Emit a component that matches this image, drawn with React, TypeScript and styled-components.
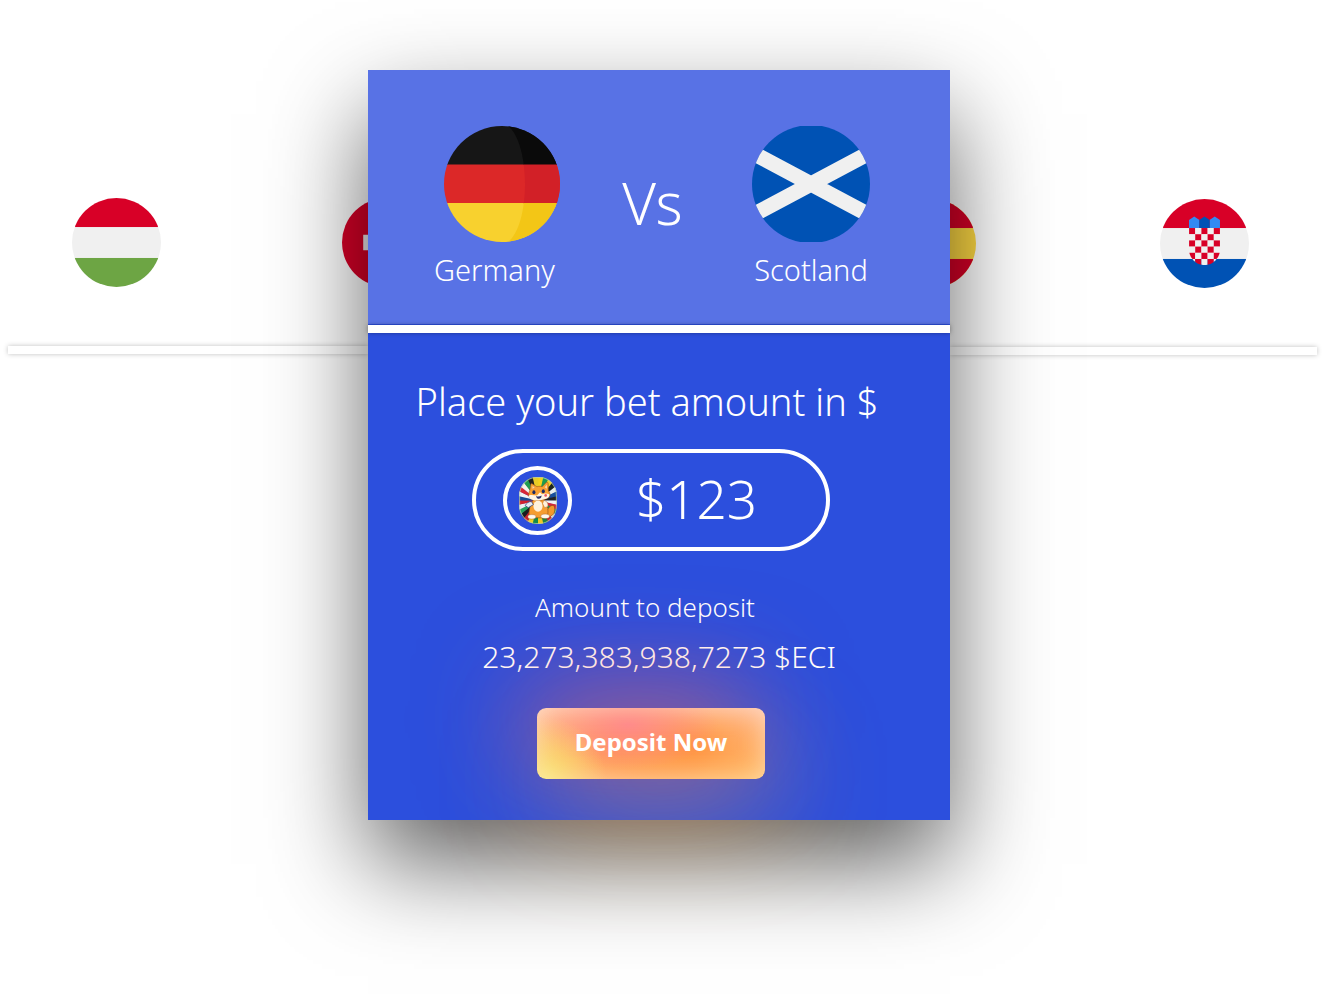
import React, { useState } from "react";
import styled, { createGlobalStyle } from "styled-components";

const GlobalStyle = createGlobalStyle`
  *, *::before, *::after { box-sizing: border-box; }
  body {
    margin: 0;
    background: #fff;
    color: #fff;
    font-family: "Noto Sans", "Open Sans", sans-serif;
    font-weight: 340;
  }
`;

const Stage = styled.main`
  display: grid;
  grid-template-columns: minmax(0, 360fr) 582px minmax(0, 367fr);
  align-items: start;
  min-height: 100vh;
  padding: 0 8px;
  overflow: hidden;
`;

const MatchStrip = styled.section<{ $side: "left" | "right" }>`
  padding-top: ${(p) => (p.$side === "left" ? 198 : 199)}px;
`;

const StripFlags = styled.div<{ $side: "left" | "right" }>`
  display: flex;
  justify-content: ${(p) => (p.$side === "left" ? "flex-start" : "flex-end")};
  gap: ${(p) => (p.$side === "left" ? 181 : 184)}px;
  padding: ${(p) => (p.$side === "left" ? "0 0 0 64px" : "0 68px 0 0")};
  margin-bottom: 59px;
  svg { display: block; flex: none; width: 89px; height: 89px; }
`;

const StripLine = styled.div`
  height: 8px;
  background: #fff;
  box-shadow: 0 0 5px rgba(0, 0, 0, 0.25);
`;

const Card = styled.form`
  position: relative;
  z-index: 1;
  margin: 70px 0 0;
  background: #2c4fdd;
  box-shadow: 0 44px 92px rgba(0, 0, 0, 0.61);
`;

const CardHeader = styled.header`
  display: grid;
  grid-template-columns: 136px 1fr 136px;
  align-items: start;
  min-height: 254px;
  padding: 56px 71px 32px 66px;
  background: #5872e5;
`;

const Team = styled.div`
  display: flex;
  flex-direction: column;
  align-items: center;
  gap: 10px;
  svg { display: block; }
`;

const TeamName = styled.span<{ $align?: "start" | "center" }>`
  align-self: ${(p) => p.$align ?? "center"};
  font-size: 29px;
  line-height: 36px;
`;

const Versus = styled.span`
  padding: 40px 8px 0 0;
  font-size: 58px;
  line-height: 74px;
  text-align: center;
`;

const Divider = styled.hr`
  position: relative;
  height: 8px;
  margin: 1px 0 0;
  border: 0;
  background: #fff;
  box-shadow: 0 0 4px rgba(0, 0, 0, 0.35);
`;

const CardBody = styled.div`
  display: flex;
  flex-direction: column;
  align-items: center;
  padding: 44px 16px 41px 0;
`;

const BetLabel = styled.label`
  padding-right: 8px;
  font-size: 38px;
  line-height: 48px;
  white-space: nowrap;
`;

const BetField = styled.div`
  display: flex;
  align-items: center;
  width: 358px;
  height: 102px;
  margin: 24px 0 40px;
  padding: 0 27px;
  border: 4px solid #fff;
  border-radius: 51px;
`;

const Token = styled.span`
  display: grid;
  flex: none;
  place-items: center;
  width: 69px;
  height: 69px;
  border: 4px solid #fff;
  border-radius: 50%;
  svg { display: block; }
`;

const BetInput = styled.input`
  flex: 1;
  min-width: 0;
  height: 72px;
  margin-left: 64px;
  padding: 0 0 4px;
  border: 0;
  outline: none;
  background: transparent;
  color: inherit;
  font: inherit;
  font-size: 53px;
`;

const DepositLabel = styled.label`
  padding-right: 12px;
  font-size: 26px;
  line-height: 32px;
`;

const DepositAmount = styled.output`
  padding-left: 16px;
  margin: 14px 0 31px;
  font-size: 30px;
  line-height: 40px;
`;

const DepositButton = styled.button`
  position: relative;
  width: 228px;
  height: 71px;
  padding: 0 0 4px;
  border: 0;
  border-radius: 9px;
  color: #fff;
  font: inherit;
  font-size: 24px;
  font-weight: 750;
  cursor: pointer;
  background:
    radial-gradient(circle at 4% 98%, rgba(248, 232, 112, 0.9), rgba(250, 224, 110, 0) 60px),
    radial-gradient(ellipse 90px 44px at 40% 24%, #ff8888, rgba(255, 140, 136, 0)),
    radial-gradient(ellipse 110px 56px at 66% 54%, #ff9440, rgba(255, 154, 69, 0)),
    radial-gradient(ellipse 100px 60px at 34% 60%, #ff9d5c, rgba(255, 157, 92, 0)),
    linear-gradient(#ffc0a0, #ffc468);
  box-shadow:
    inset 0 0 24px rgba(255, 240, 225, 0.5),
    -16px -24px 100px rgba(255, 90, 80, 0.52),
    12px 34px 110px rgba(255, 170, 50, 0.42);
`;

type FlagProps = { size?: number };

const Tricolour = ({ name, id, colours, children }: {
  name: string;
  id: string;
  colours: [string, string, string];
  children?: React.ReactNode;
}) => (
  <svg viewBox="0 0 512 512" role="img" aria-label={name}>
    <clipPath id={id}><circle cx="256" cy="256" r="256" /></clipPath>
    <g clipPath={`url(#${id})`}>
      <rect width="512" height="512" fill={colours[1]} />
      <rect width="512" height="167" fill={colours[0]} />
      <rect y="345" width="512" height="167" fill={colours[2]} />
      {children}
    </g>
  </svg>
);

const SwissFlag = () => (
  <svg viewBox="0 0 512 512" role="img" aria-label="Switzerland">
    <circle cx="256" cy="256" r="256" fill="#d80027" />
    <path fill="#f0f0f0" d="M390 212h-90v-90h-88v90h-90v88h90v90h88v-90h90z" />
  </svg>
);

const cells = Array.from({ length: 30 }, (_, i) => i);

const CroatianArms = () => (
  <>
    <clipPath id="shield"><path d="M167 167h178v124a89 89 0 0 1-178 0z" /></clipPath>
    <g clipPath="url(#shield)">
      {cells.map((i) => {
        const col = i % 5;
        const row = Math.floor(i / 5);
        return (
          <rect key={i} x={167 + col * 35.6} y={167 + row * 35.6} width="36" height="36"
            fill={(col + row) % 2 ? "#f0f0f0" : "#d80027"} />
        );
      })}
    </g>
    <path fill="#338af3" d="M167 167v-46l30-20 30 20v46z M285 167v-46l30-20 30 20v46z" />
    <path fill="#0052b4" d="M226 167v-46l30-20 30 20v46z" />
  </>
);

const GermanFlag = ({ size = 116 }: FlagProps) => (
  <svg width={size} height={size} viewBox="0 0 116 116" role="img" aria-label="Flag of Germany">
    <clipPath id="de"><circle cx="58" cy="58" r="58" /></clipPath>
    <clipPath id="de-shade"><path d="M64 0C75 8 81 33 81 58S75 108 64 116H116V0z" /></clipPath>
    <g clipPath="url(#de)">
      <rect width="116" height="39" fill="#161616" />
      <rect y="38.5" width="116" height="39" fill="#dc2828" />
      <rect y="77" width="116" height="39" fill="#f8d12e" />
      <g clipPath="url(#de-shade)">
        <rect width="116" height="39" fill="#0a0a0a" />
        <rect y="38.5" width="116" height="39" fill="#d22027" />
        <rect y="77" width="116" height="39" fill="#f3c616" />
      </g>
    </g>
  </svg>
);

const ScottishFlag = () => (
  <svg width="118" height="116" viewBox="0 0 118 116" role="img" aria-label="Flag of Scotland">
    <clipPath id="sc"><circle cx="59" cy="58" r="59" /></clipPath>
    <g clipPath="url(#sc)">
      <rect width="118" height="116" fill="#0052b4" />
      <path d="M-3 25L121 91M121 25L-3 91" stroke="#f0f0f0" strokeWidth="15.2" />
    </g>
  </svg>
);

const rayColours = [
  "#f5d21c", "#1d9b4e", "#f2d22a", "#1c2420", "#e8eef0", "#174f9c", "#202326", "#f0f3f4",
  "#d7263a", "#1a9a55", "#f3f3f3", "#c9252f", "#22813f", "#f3c920", "#138a4a", "#f0d026",
  "#c8202c", "#191c1e", "#23a25c", "#e9f1f2", "#d2212f", "#184b93", "#eff3f5", "#d92736",
  "#f6f2e8", "#1f9b50", "#20221f", "#e9cb25",
];

const ray = (i: number) => {
  const step = (Math.PI * 2) / rayColours.length;
  const a = i * step - Math.PI / 2;
  const b = a + step + 0.02;
  return `M18.5 23L${18.5 + 40 * Math.cos(a)} ${23 + 40 * Math.sin(a)}L${18.5 + 40 * Math.cos(b)} ${23 + 40 * Math.sin(b)}z`;
};

const Mascot = () => (
  <svg width="38" height="47" viewBox="0 0 37 46" aria-hidden="true">
    <clipPath id="badge"><rect width="37" height="46" rx="17" ry="18" /></clipPath>
    <g clipPath="url(#badge)">
      {rayColours.map((c, i) => <path key={i} d={ray(i)} fill={c} />)}
    </g>
    <rect x=".5" y=".5" width="36" height="45" rx="16.5" ry="17.5" fill="none" stroke="#b5cdb0" strokeOpacity=".75" />
    <path d="M26 36c2-5 4-9 8-8 2 4 1 10-5 11z" fill="#f39a2b" stroke="#7b3d13" strokeWidth=".5" />
    <path d="M14 22c-3 5-5 11-4 16l5 2h10l3-3c1-6-1-11-4-15z" fill="#f59d30" stroke="#7b3d13" strokeWidth=".5" />
    <ellipse cx="18.500" cy="28.500" rx="4.500" ry="5.500" fill="#fff2dc" />
    <path d="M12 24c-3 0-5 2-6 4l3 2 5-3z" fill="#e8edf3" stroke="#243c79" strokeWidth=".7" />
    <path d="M24 23c3 0 5 3 4 6l-3 1-2-4z" fill="#fff2dc" stroke="#b96b21" strokeWidth=".5" />
    <ellipse cx="12.500" cy="39" rx="4" ry="2.200" fill="#fff8ec" stroke="#9c5a22" strokeWidth=".4" />
    <ellipse cx="25.500" cy="38.500" rx="4.200" ry="2.200" fill="#fff8ec" stroke="#9c5a22" strokeWidth=".4" />
    <path d="M10.500 13L11.500 7c0-1 1-1 2 0l4 2.500c2-.5 4-.5 5 0l4-4c1-1 2 0 2 1l.200 7c4 5 .500 8.500-9.500 9.500-8 0-12-3-8.700-10z" fill="#f7a033" stroke="#8a4716" strokeWidth=".5" />
    <path d="M13 11.500l.200-3 2 2zM25 10l2.200-2.500.100 4z" fill="#fbd4ac" />
    <path d="M9.500 18c3-1 5 0 8 0l3-3 2 2c2-1 5-1 7 0 1 4-4 5-10 6-6 0-10-1-10-5z" fill="#fff5e4" />
    <ellipse cx="14.500" cy="15" rx="1.500" ry="2" fill="#1b2a66" />
    <ellipse cx="23.700" cy="14" rx="1.500" ry="2" fill="#1b2a66" />
    <path d="M16.500 18.500c2 1 3.500.5 5.500-.5 0 4-4.500 4.500-5.500.5z" fill="#26316e" />
    <circle cx="26" cy="18" r="1.300" fill="#ef5860" />
  </svg>
);

export default function App() {
  const [bet, setBet] = useState("$123");
  return (
    <>
      <GlobalStyle />
      <Stage>
        <MatchStrip $side="left">
          <StripFlags $side="left">
            <Tricolour name="Hungary" id="hu" colours={["#d80027", "#f0f0f0", "#6da544"]} />
            <SwissFlag />
          </StripFlags>
          <StripLine />
        </MatchStrip>

        <Card onSubmit={(e) => e.preventDefault()}>
          <CardHeader>
            <Team>
              <GermanFlag />
              <TeamName $align="start">Germany</TeamName>
            </Team>
            <Versus>Vs</Versus>
            <Team>
              <ScottishFlag />
              <TeamName>Scotland</TeamName>
            </Team>
          </CardHeader>
          <Divider />
          <CardBody>
            <BetLabel htmlFor="bet">Place your bet amount in $</BetLabel>
            <BetField>
              <Token><Mascot /></Token>
              <BetInput id="bet" value={bet} onChange={(e) => setBet(e.target.value)} />
            </BetField>
            <DepositLabel htmlFor="deposit">Amount to deposit</DepositLabel>
            <DepositAmount id="deposit">23,273,383,938,7273 $ECI</DepositAmount>
            <DepositButton type="submit">Deposit Now</DepositButton>
          </CardBody>
        </Card>

        <MatchStrip $side="right">
          <StripFlags $side="right">
            <Tricolour name="Spain" id="es" colours={["#d80027", "#ffda44", "#d80027"]} />
            <Tricolour name="Croatia" id="hr" colours={["#d80027", "#f0f0f0", "#0052b4"]}>
              <CroatianArms />
            </Tricolour>
          </StripFlags>
          <StripLine />
        </MatchStrip>
      </Stage>
    </>
  );
}
